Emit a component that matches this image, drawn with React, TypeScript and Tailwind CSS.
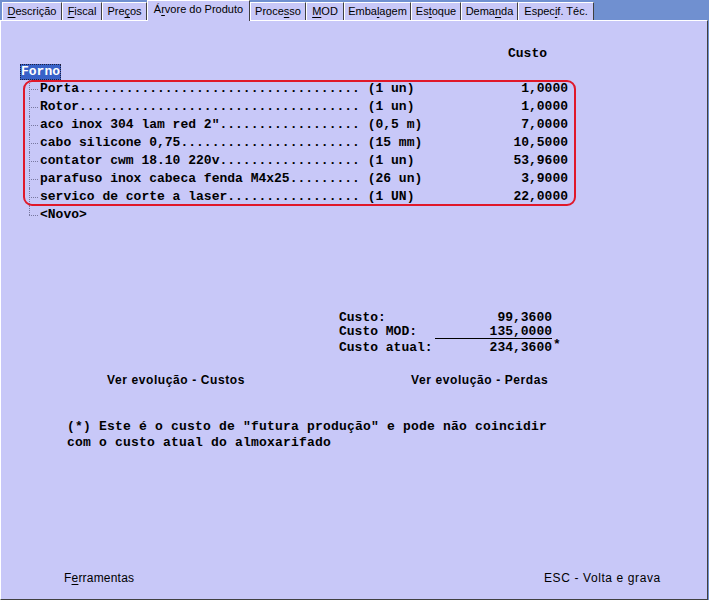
import React from 'react';

const tabs: { label: string; key: number; w: string }[] = [
    { label: 'Descrição', key: 0, w: 'w-[60px]' },
    { label: 'Fiscal', key: 0, w: 'w-[40px]' },
    { label: 'Preços', key: 3, w: 'w-[45px]' },
    { label: 'Árvore do Produto', key: 1, w: 'w-[103px]' },
    { label: 'Processo', key: 5, w: 'w-[56px]' },
    { label: 'MOD', key: 0, w: 'w-[38px]' },
    { label: 'Embalagem', key: 4, w: 'w-[67px]' },
    { label: 'Estoque', key: 2, w: 'w-[50px]' },
    { label: 'Demanda', key: 4, w: 'w-[57px]' },
    { label: 'Especif. Téc.', key: 5, w: 'w-[76px]' },
];

const items = [
    ['Porta', '(1 un)', '1,0000'],
    ['Rotor', '(1 un)', '1,0000'],
    ['aco inox 304 lam red 2"', '(0,5 m)', '7,0000'],
    ['cabo silicone 0,75', '(15 mm)', '10,5000'],
    ['contator cwm 18.10 220v', '(1 un)', '53,9600'],
    ['parafuso inox cabeca fenda M4x25', '(26 un)', '3,9000'],
    ['servico de corte a laser', '(1 UN)', '22,0000'],
];

const sans = "font-['Liberation_Sans',Arial,sans-serif]";
const mono = "font-['Liberation_Mono','Courier_New',monospace] font-bold text-[13px]";

const Accel = ({ text, at }: { text: string; at: number }) => (
    <>
        {text.slice(0, at)}
        <span className="underline underline-offset-2">{text[at]}</span>
        {text.slice(at + 1)}
    </>
);

const Connector = ({ last }: { last?: boolean }) => (
    <span className="relative w-[11px] h-[18px] shrink-0">
        <span className={`absolute left-0 top-0 border-l border-dotted border-[#7878a0] ${last ? 'h-[9px]' : 'h-[18px]'}`} />
        <span className="absolute left-0 top-[9px] w-[9px] border-t border-dotted border-[#7878a0]" />
    </span>
);

export default function App() {
    return (
        <div className={`w-[709px] h-[600px] bg-[#7090d0] overflow-hidden text-black ${sans}`}>
            {/* Tabs */}
            <div className="h-[20px] flex items-end pl-[2px]">
                {tabs.map((t, i) => {
                    const active = i === 3;
                    return (
                        <div
                            key={t.label}
                            className={`${t.w} flex items-center justify-center text-[11px] bg-[#c8c8f8] border-l border-t border-white border-r border-r-[#404040] ${
                                active ? 'h-[21px] -mb-[1px] relative z-10 pb-[3px]' : 'h-[18px]'
                            }`}
                        >
                            <span className="whitespace-nowrap leading-none">
                                <Accel text={t.label} at={t.key} />
                            </span>
                        </div>
                    );
                })}
            </div>

            {/* Panel */}
            <div className="w-[708px] h-[580px] bg-[#c8c8f8] border-t border-l border-white border-r border-r-[#404040] border-b border-b-[#404040] flex flex-col">
                <div className={`${mono} mt-[24px] h-[18px] leading-[18px] pl-[507px]`}>Custo</div>

                <div className="mt-[1px] pl-[19px] h-[16px] flex">
                    <span className={`${mono} h-[16px] leading-[16px] px-[1px] bg-[#3862c8] text-white outline-1 outline-dotted outline-[#202040] -outline-offset-1`}>
                        Forno
                    </span>
                </div>

                {/* Tree */}
                <div className="relative ml-[28px] w-[540px]">
                    {items.map(([name, unit, value]) => (
                        <div key={name} className={`flex h-[18px] leading-[18px] ${mono}`}>
                            <Connector />
                            <span className="whitespace-pre w-[528px] flex justify-between">
                                <span>{`${name.padEnd(41, '.')} ${unit}`}</span>
                                <span>{value}</span>
                            </span>
                        </div>
                    ))}
                    <div className={`flex h-[18px] leading-[18px] ${mono}`}>
                        <Connector last />
                        <span>&lt;Novo&gt;</span>
                    </div>
                    <div className="absolute left-[-6px] top-[0px] w-[553px] h-[126px] border-2 border-[#e0182a] rounded-[9px] pointer-events-none" />
                </div>

                {/* Totals */}
                <div className={`${mono} mt-[87px] ml-[338px] w-[240px]`}>
                    <div className="flex h-[14px] leading-[14px]">
                        <span className="w-[96px]">Custo:</span>
                        <span className="w-[117px] text-right">99,3600</span>
                    </div>
                    <div className="flex h-[14px] leading-[13px]">
                        <span className="w-[96px]">Custo MOD:</span>
                        <span className="w-[117px] text-right border-b border-black">135,0000</span>
                    </div>
                    <div className="flex h-[14px] leading-[14px] mt-[2px]">
                        <span className="w-[96px]">Custo atual:</span>
                        <span className="w-[117px] text-right">234,3600</span>
                        <span className="text-[13px] leading-[8px] ml-[1px]">*</span>
                    </div>
                </div>

                <div className="mt-[17px] h-[16px] leading-[16px] flex text-[12px] font-bold tracking-[0.6px]">
                    <span className="ml-[106px] w-[304px]">Ver evolução - Custos</span>
                    <span>Ver evolução - Perdas</span>
                </div>

                <div className={`${mono} mt-[31px] ml-[66px] leading-[16px] whitespace-pre tracking-[0.2px]`}>
                    <div>(*) Este é o custo de "futura produção" e pode não coincidir</div>
                    <div>com o custo atual do almoxarifado</div>
                </div>

                <div className="mt-[119px] h-[16px] leading-[16px] flex text-[12px]">
                    <span className="ml-[63px] w-[480px] tracking-[0.2px]">
                        <Accel text="Ferramentas" at={1} />
                    </span>
                    <span className="tracking-[0.6px]">ESC - Volta e grava</span>
                </div>
            </div>
        </div>
    );
}
